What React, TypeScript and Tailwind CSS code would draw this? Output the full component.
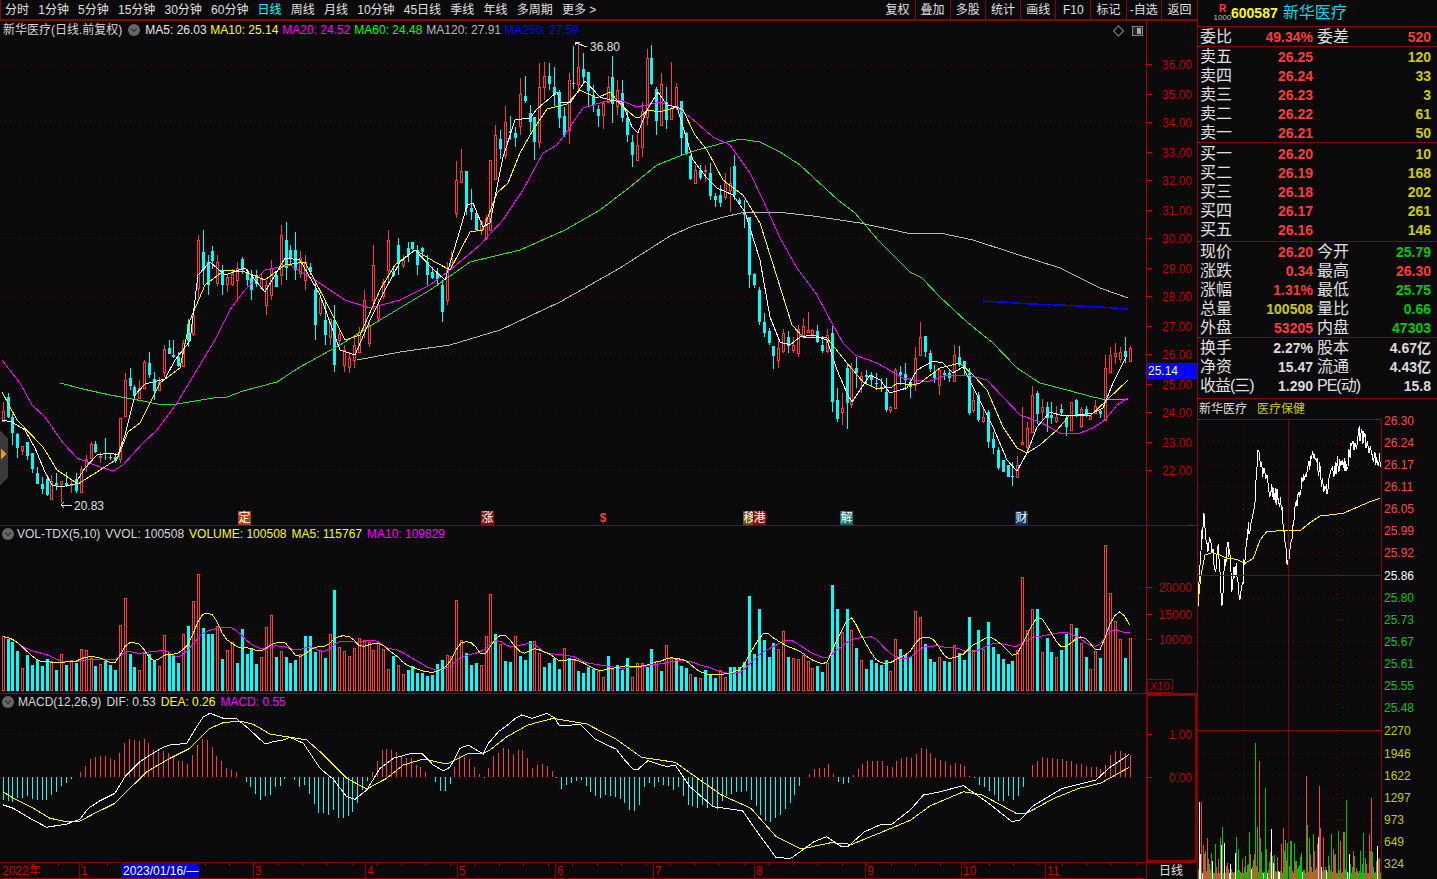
import { ChevronDown } from 'lucide-react';

const BG = '#0a0a0a';
const RED = '#ff3c3c';
const CYAN = '#00ffff';
const AXIS = '#b80000';
const GRID = '#640000';

// seeded noise so every load draws the same picture
function makeRand(seed: number) {
  let s = seed;
  return () => {
    s = (s * 16807) % 2147483647;
    return s / 2147483647;
  };
}

type Pt = [number, number];
const toPath = (pts: Pt[]) => pts.map((p) => `${p[0].toFixed(1)},${p[1].toFixed(1)}`).join(' ');
const lerp = (pts: Pt[], x: number) => {
  if (x <= pts[0][0]) return pts[0][1];
  for (let i = 1; i < pts.length; i++) {
    if (x <= pts[i][0]) {
      const t = (x - pts[i - 1][0]) / (pts[i][0] - pts[i - 1][0] || 1);
      return pts[i - 1][1] + (pts[i][1] - pts[i - 1][1]) * t;
    }
  }
  return pts[pts.length - 1][1];
};

// volume bars: positive is a red (up) day, negative a cyan (down) day
const VOL = [
  55, -52, -49, -40, 23, -36, -26, -31, -25, -32, 30, -21, 37, -26, 31, -28, 42, 41, 33, -25, 27, -30, -26, -21, 66, 93,
  -37, -24, 21, 38, -37, -30, 25, 56, -37, -36, -28, 57, -65, 90, 117, -63, -57, -57, 65, -32, 41, 49, -28, -62, -37,
  -42, -27, 34, 64, 76, -34, 40, -34, -28, -31, 37, -55, -55, -39, 41, -33, 57, -101, 44, 40, 35, 43, 53, 51, 49, 41,
  49, 42, 22, -35, 26, 17, -21, -25, -18, -18, -15, -16, -27, -31, 36, 35, 91, 51, -38, -26, -28, 26, 55, 97,
  -57, 47, -30, -29, 55, -35, -31, -50, 50, 38, -24, -28, -33, -22, 43, -33, 31, -20, -18, -24, -22, 20, 14, -35, 22,
  -26, -21, -33, 14, 28, 28, -24, -42, 30, -20, 46, 33, -33, -25, -23, 17, -14, 13, -21, -16, -13, 21, 14, -24, -24,
  -24, -29, -95, -37, -82, -51, -34, -48, 42, 60, -34, 33, 32, 36, 30, 23,
  -25, -19, 28, -106, -82, 59, -82, 61, -43, 31, -22, -31, -28, -26, -31, 20, 52, -42, -36, -34, 80, 74, -47, -32, -29,
  34, -30, -29, 46, -38, -31, -74, 41, -61, 42, -69, -44, -37, -32, -27, -30, 41, 114, 61, 82, -82, 39, -53, -39, 34,
  -41, -57, 67, -63, 48, -34, 22, 40, -33, 146, 98, 70, 52, -33, 53,
];

const X0 = 2.7;
const STEP = (1129.5 - X0) / (VOL.length - 1);
const barX = (i: number) => X0 + i * STEP;

// MACD histogram heights, read bar by bar
const HIST = [
  -23, -24, -25, -21, -21, -19, -22, -23, -23, -23, -18, -15, -9, -6, -2, 0, 5, 11, 18, 20, 21, 21, 19, 17, 24, 34, 38,
  37, 36, 38, 34, 27, 25, 26, 24, 21, 16, 16, 13, 22, 32, 38, 37, 30, 21, 16, 9, 7, 5, 0, -5, -10, -17, -23, -19, -18,
  -10, -9, -2, 0, -3, -10, -8, -17, -27, -36, -36, -38, -33, -41, -41, -39, -35, -26, -13, -4, 5, 16, 27, 28, 27, 25,
  20, 19, 19, 12, 10, 5, 0, -5, -14, -14, -7, 10, 22, 20, 18, 10, 3, -1, 9, 21, 24, 29, 28, 23, 27, 27, 19, 9, 12, 13,
  11, 6, -1, -12, -8, -6, -4, -3, -9, -15, -19, -21, -18, -19, -20, -22, -26, -33, -34, -28, -10, -6, -10, -5, -8, -9,
  -13, -10, -19, -28, -29, -31, -28, -31, -29, -32, -24, -19, -17, -15, -15, -14, -23, -29, -38, -44, -45, -41, -38,
  -32, -26, -18, -9, 0, 3, 8, 9, 9, 13, 3, -5, -7, -6, 2, 8, 13, 16, 16, 16, 16, 11, 10, 16, 19, 20, 19, 23, 29, 28, 24,
  19, 17, 16, 12, 14, 13, 11, 1, -1, -8, -10, -14, -18, -24, -24, -19, -23, -19, -10, 0, 12, 16, 20, 19, 19, 18, 18, 16,
  16, 13, 13, 11, 10, 10, 8, 12, 22, 26, 26, 24, 22,
];

const z6 = (p: number[]): Pt => [p[0] / 3, 690 + p[1] / 3];
const z11 = (p: number[]): Pt => [490 + p[0] / 2.376, 700 + p[1] / 3];

const DIF: Pt[] = [
  ...[[8,344],[40,355],[90,385],[140,412],[200,402],[240,388],[265,355],[300,332],[345,310],[375,260],[420,215],[450,195],[490,172],[510,165],[560,160],[590,110],[610,80],[630,70],[670,85],[710,87],[745,115],[795,162],[820,155],[850,150],[870,142],[910,160],[960,235],[1000,268],[1040,320],[1065,328],[1100,300],[1140,235],[1180,205],[1235,190],[1265,190],[1300,225],[1330,242],[1350,232],[1380,175],[1405,165],[1450,192],[1465,160]].map(z6),
  ...[[0,125],[20,95],[45,72],[60,55],[75,45],[100,55],[135,40],[155,55],[165,78],[215,73],[250,118],[300,148],[320,180],[340,208],[352,208],[375,182],[420,200],[440,195],[475,260],[530,320],[600,332],[640,405],[680,473],[715,475],[770,425],[800,410],[835,440],[850,440],[890,395],[930,373],[955,373],[1000,328],[1030,285],[1060,278],[1125,257],[1185,310],[1240,365],[1260,360],[1290,318],[1360,265],[1440,240],[1470,205],[1519,163]].map(z11),
];
const DEA: Pt[] = [
  ...[[8,305],[50,330],[100,355],[150,385],[190,393],[240,393],[280,372],[345,340],[390,295],[440,245],[510,205],[570,175],[630,115],[670,98],[720,93],[760,103],[810,132],[860,140],[920,150],[960,185],[1040,265],[1100,297],[1160,265],[1210,225],[1270,207],[1340,222],[1400,192],[1450,190]].map(z6),
  ...[[0,150],[40,110],[90,75],[150,55],[230,72],[300,118],[360,172],[440,187],[490,232],[550,285],[620,325],[680,410],[740,447],[810,428],[860,433],[930,397],[1000,360],[1045,318],[1125,275],[1170,285],[1250,340],[1275,340],[1340,295],[1400,265],[1450,250],[1519,202]].map(z11),
];

const MA5: Pt[] = [
  [2,420],[12,422],[25,430],[35,448],[45,472],[52,485],[60,487],[75,484],[85,468],[97,455],[110,453],[118,455],[125,435],[135,395],[145,384],[165,379],[175,360],[190,341],[198,275],[210,262],[225,275],[245,268],[265,292],[285,258],[300,260],[320,295],[340,350],[355,355],[370,320],[385,290],[400,262],[415,250],[432,268],[445,280],[460,230],[467,205],[473,203],[483,227],[490,223],[503,157],[515,120],[530,118],[537,109],[557,92],[560,102],[570,103],[585,81],[600,97],[610,100],[622,102],[632,127],[638,133],[647,110],[658,92],[667,105],[677,107],[693,160],[707,178],[717,188],[733,195],[745,212],[760,260],[770,317],[780,342],[790,345],[800,337],[813,335],[827,340],[837,370],[847,393],[852,402],[860,390],[870,375],[880,380],[890,393],[907,388],[917,370],[933,361],[943,363],[953,373],[963,367],[973,387],[993,427],[1007,460],[1017,471],[1027,453],[1037,427],[1050,412],[1063,416],[1077,415],[1093,413],[1103,408],[1113,383],[1127,355],
];
const MA10: Pt[] = [
  [2,392],[17,420],[43,447],[57,470],[78,484],[97,472],[117,459],[128,432],[140,423],[160,383],[180,368],[190,320],[205,285],[225,270],[245,272],[265,280],[285,265],[305,262],[325,300],[345,340],[360,335],[380,290],[395,265],[415,250],[435,262],[450,270],[470,232],[483,230],[497,193],[508,183],[520,153],[533,130],[547,109],[567,104],[580,90],[597,98],[610,92],[623,107],[635,117],[640,117],[648,110],[660,112],[677,107],[683,110],[695,135],[707,150],[723,180],[743,195],[760,223],[777,277],[792,325],[803,337],[827,338],[847,363],[863,382],[877,389],[892,387],[897,383],[912,385],[920,383],[940,368],[960,363],[973,375],[987,390],[1003,427],[1017,448],[1027,453],[1040,445],[1057,430],[1070,415],[1090,416],[1107,400],[1128,380],
];
const MA20: Pt[] = [
  [2,360],[20,383],[32,405],[45,417],[63,443],[77,458],[100,467],[113,471],[123,465],[143,443],[157,430],[177,403],[197,370],[215,340],[230,310],[245,290],[265,270],[290,265],[315,280],[345,300],[370,308],[400,300],[430,285],[450,270],[480,245],[503,220],[523,190],[543,153],[557,145],[570,127],[583,108],[603,102],[620,100],[637,107],[660,102],[677,108],[690,117],[713,137],[730,145],[750,173],[763,200],[780,238],[797,268],[817,295],[833,325],[843,343],[855,355],[877,363],[903,378],[927,382],[947,375],[967,375],[987,380],[1003,397],[1020,415],[1040,422],[1060,433],[1080,433],[1093,428],[1105,420],[1117,405],[1128,398],
];
const MA60: Pt[] = [
  [60,383],[83,389],[110,395],[143,401],[157,404],[177,404],[213,398],[227,397],[243,391],[277,382],[300,367],[340,345],[380,320],[430,290],[470,262],[520,250],[565,230],[600,210],[630,187],[657,165],[690,152],[723,143],[740,139],[760,142],[780,152],[800,165],[838,200],[855,213],[878,240],[910,272],[922,278],[940,297],[967,322],[993,343],[1017,368],[1040,383],[1067,390],[1093,397],[1107,400],[1128,399],
];
const MA120: Pt[] = [
  [357,360],[400,352],[450,345],[500,330],[560,302],[620,268],[670,236],[693,226],[720,218],[745,212],[777,212],[813,216],[860,223],[907,233],[940,233],[973,240],[1013,253],[1060,268],[1100,288],[1128,298],
];
const MA250: Pt[] = [[983,301],[1000,302],[1030,304],[1060,305],[1100,307],[1128,309]];

type Candle = [number, number, number, number, number, number]; // x, high, top, bottom, low, up
const fromZoom = (ox: number, oy: number, rows: number[][]): Candle[] =>
  rows.map((r) => [ox + r[0] / 3, oy + r[1] / 3, oy + r[2] / 3, oy + r[3] / 3, oy + r[4] / 3, r[5]]);

const CANDLES: Candle[] = [
  ...fromZoom(0, 340, [
    [7,185,213,245,245,1],[22,160,172,230,235,0],[37,222,232,280,315,0],[50,280,283,325,355,0],[65,318,318,330,345,1],[80,305,305,347,360,0],[95,340,340,387,400,0],[110,380,398,433,433,0],[124,410,432,447,462,0],[140,405,418,465,468,0],[152,405,425,478,480,1],[166,400,430,435,450,0],[181,423,423,432,488,1],[196,395,430,436,440,0],[211,420,432,437,460,1],[226,400,418,452,458,0],[241,378,388,458,458,1],[254,345,358,380,395,1],[268,307,312,355,358,1],[283,303,312,335,338,0],[298,335,348,352,368,1],[313,295,338,340,360,0],[328,338,350,355,360,0],[343,340,350,362,370,0],[355,235,235,358,370,1],[370,100,120,230,230,1],[385,85,113,137,150,0],[400,135,140,168,170,0],[415,120,145,175,175,1],[430,60,68,145,145,1],[445,35,68,105,115,0],[458,97,118,152,180,0],[472,110,128,150,150,1],[487,15,27,97,110,1],[502,0,25,42,42,0],[517,0,45,50,55,0],[532,35,52,78,80,0],[547,0,10,80,82,1],
  ]),
  ...[
    [198,235,240,288,298,1],[205,230,252,270,285,0],[210,255,262,285,295,0],[222,265,270,285,295,0],[236,262,268,280,300,1],[250,270,278,290,300,0],[265,280,285,305,315,1],[272,260,268,295,300,1],[282,225,235,275,285,1],[287,222,240,268,280,0],[295,232,250,270,280,0],[305,255,262,280,290,1],[315,280,290,325,340,0],[325,300,320,335,345,0],[335,305,320,365,372,0],[345,345,350,365,372,1],[355,335,345,360,368,1],[365,290,300,330,338,1],[375,245,265,300,310,1],[390,230,240,270,285,1],[400,238,245,262,275,0],[415,245,250,265,275,0],[428,255,262,275,285,0],[442,280,285,312,322,0],[448,262,270,300,305,1],
  ] as Candle[],
  ...fromZoom(440, 30, [
    [43,392,450,550,565,1],[55,358,423,457,457,1],[70,423,423,533,555,0],[85,478,535,545,570,0],[100,548,548,600,600,0],[145,390,390,600,600,1],[158,285,315,448,450,1],[172,300,327,357,388,0],[187,228,277,375,388,1],[202,258,303,308,330,0],[217,290,310,325,350,0],[232,145,192,290,315,1],[247,138,198,212,220,0],[260,225,250,275,305,0],[275,262,262,335,390,0],[290,98,172,337,355,1],[305,97,138,172,210,1],[320,100,138,162,180,0],[335,112,172,195,228,0],[350,180,187,265,295,0],[362,230,258,315,320,0],[377,130,150,302,342,1],[392,48,160,162,178,0],[407,37,113,163,190,1],[422,70,117,142,155,0],[437,125,125,182,228,0],[449,165,195,225,245,0],[464,225,237,258,290,0],[479,215,220,257,297,1],[493,138,172,218,218,1],[508,78,142,222,278,0],[523,150,180,228,255,1],[538,150,188,263,275,0],[550,240,265,315,335,0],[565,315,337,375,412,0],[580,313,345,390,390,1],[595,215,245,352,380,1],[610,58,85,263,285,1],[625,45,85,162,165,0],[640,172,177,272,315,0],[652,130,162,285,285,1],[667,170,215,270,298,0],[682,95,235,267,267,1],[697,160,172,232,240,1],[712,213,213,323,375,0],[727,307,310,372,375,0],[742,375,378,447,450,0],[755,405,420,460,462,1],[769,405,420,445,450,0],[784,405,420,425,455,1],[800,400,430,497,510,0],[815,490,497,510,532,0],[830,465,495,520,530,0],[845,430,460,502,510,1],[858,410,460,480,545,1],[872,375,408,495,510,0],[887,505,510,522,525,0],
  ]),
  ...fromZoom(740, 200, [
    [18,0,35,45,85,0],[30,50,50,225,263,0],[45,220,222,255,265,0],[58,260,270,365,375,0],[73,340,367,400,412,0],[88,385,393,430,435,0],[103,438,438,467,508,0],[118,415,445,482,503,1],[133,388,400,455,458,1],[148,393,410,437,458,0],[160,410,435,452,458,1],[175,375,388,460,472,1],[190,353,378,405,405,1],[205,337,392,397,400,1],[220,388,392,402,412,1],[235,375,392,425,430,0],[250,408,435,452,460,0],[262,388,405,455,458,1],[277,378,400,607,635,0],[292,565,600,657,665,0],[307,578,625,637,675,1],[322,490,505,610,687,0],[337,490,505,612,623,1],[352,472,505,520,565,0],[365,515,530,540,580,1],[380,510,525,530,555,0],[395,515,525,540,560,0],[410,520,548,552,570,0],[425,535,560,568,575,0],[440,535,575,630,635,0],[455,618,622,632,638,1],[466,503,512,625,627,1],[481,497,515,525,555,0],[496,490,522,540,570,0],[511,535,545,560,593,0],[526,440,475,555,572,1],[541,365,412,465,465,1],[556,408,408,455,470,0],[569,450,458,507,515,0],[584,495,517,535,550,0],[598,505,510,555,585,1],[613,510,518,525,540,0],[628,510,520,535,545,0],[643,435,465,545,545,1],[658,437,472,495,500,0],[671,483,483,505,525,0],[686,505,520,640,645,0],[700,570,602,630,638,1],[715,575,585,660,665,0],[730,620,652,665,670,1],[745,630,635,725,743,0],[760,695,717,743,762,0],[773,740,750,805,810,0],[787,780,780,815,815,0],[802,795,795,830,830,0],[817,785,828,830,858,0],[832,768,795,833,835,1],[847,620,727,733,735,1],[862,665,685,742,760,1],[875,558,585,697,700,1],[890,572,578,642,672,0],[905,598,622,633,660,1],[920,605,622,655,695,0],[935,605,645,655,672,0],[950,618,652,663,668,1],[965,612,627,640,648,0],[977,645,655,680,708,0],[992,605,607,690,692,1],[1007,598,600,645,652,0],[1022,620,628,680,685,1],[1037,618,628,645,650,0],[1052,645,650,657,660,1],[1067,600,620,640,640,1],[1082,630,632,643,655,0],[1093,465,505,660,662,1],[1108,440,465,516,518,1],[1123,430,460,470,492,1],[1138,440,457,477,490,1],[1153,410,453,470,490,0],[1168,438,445,483,485,1],
  ]),
];

function buildCandles() {
  const rand = makeRand(4711);
  const byIndex = new Map<number, Candle>();
  CANDLES.forEach((c) => {
    let i = Math.round((c[0] - X0) / STEP);
    if (byIndex.has(i) && !byIndex.has(i + 1)) i += 1;
    byIndex.set(i, c);
  });
  return VOL.map((v, i) => {
    const known = byIndex.get(i);
    if (known) return { x: barX(i), hi: known[1], top: known[2], bot: known[3], lo: known[4], up: known[5] === 1 };
    const mid = lerp(MA5, barX(i)) + (rand() - 0.5) * 24;
    const half = 2 + rand() * Math.abs(v) * 0.15;
    return { x: barX(i), hi: mid - half - rand() * 8, top: mid - half, bot: mid + half, lo: mid + half + rand() * 8, up: v > 0 };
  });
}

function movingAvg(n: number): Pt[] {
  const raw = VOL.map((_, i) => {
    const from = Math.max(0, i - n + 1);
    const part = VOL.slice(from, i + 1);
    return part.reduce((s, v) => s + Math.abs(v), 0) / part.length;
  });
  return raw.map((_, i) => {
    const a = raw[Math.max(0, i - 1)];
    const c = raw[Math.min(raw.length - 1, i + 1)];
    return [barX(i), 691 - (a + raw[i] * 2 + c) / 4] as Pt;
  });
}

function Circle() {
  return (
    <span className="flex h-[12px] w-[12px] shrink-0 items-center justify-center rounded-full bg-[#666666]">
      <ChevronDown size={10} strokeWidth={2.5} color="#1c1c1c" />
    </span>
  );
}

function MainPane() {
  const candles = buildCandles();
  const prices = ['36.00', '35.00', '34.00', '33.00', '32.00', '31.00', '30.00', '29.00', '28.00', '27.00', '26.00', '25.00', '24.00', '23.00', '22.00'];
  const ys = [64, 94, 122, 152, 180, 210, 238, 268, 296, 326, 354, 384, 412, 442, 470];
  return (
    <div className="relative h-[505px] border-b border-[#8a0000]">
      <svg width={1197} height={504} viewBox="0 21 1197 504" shapeRendering="crispEdges">
        {ys.filter((_, i) => i % 2 === 0).map((y) => (
          <line key={y} x1={0} x2={1146} y1={y + 0.5} y2={y + 0.5} stroke={GRID} strokeDasharray="1 4" />
        ))}
        {candles.map((c, i) => {
          const X = Math.round(c.x);
          const color = c.up ? RED : CYAN;
          return (
            <g key={i}>
              <line x1={X + 0.5} x2={X + 0.5} y1={c.hi} y2={c.lo} stroke={color} />
              {c.up ? (
                <rect x={X - 0.5} y={c.top} width={2} height={Math.max(c.bot - c.top, 1)} fill={BG} stroke={color} />
              ) : (
                <rect x={X - 1} y={c.top} width={3} height={Math.max(c.bot - c.top, 1)} fill={color} />
              )}
            </g>
          );
        })}
        <polyline points={toPath(MA120)} fill="none" stroke="#b8b8b8" />
        <polyline points={toPath(MA60)} fill="none" stroke="#22e622" />
        <polyline points={toPath(MA250)} fill="none" stroke="#0000ff" strokeWidth={1.5} />
        <polyline points={toPath(MA20)} fill="none" stroke="#ff00ff" />
        <polyline points={toPath(MA10)} fill="none" stroke="#ffff00" />
        <polyline points={toPath(MA5)} fill="none" stroke="#ffffff" />

        <path d="M1146.5 21V525" stroke="#a00000" />
        {ys.map((y, i) => (
          <g key={y}>
            <line x1={1147} x2={1152} y1={y + 0.5} y2={y + 0.5} stroke={AXIS} />
            <text x={1192} y={y + 5} textAnchor="end" fontSize={12} fill={AXIS} shapeRendering="auto">
              {prices[i]}
            </text>
          </g>
        ))}
        <rect x={1147} y={363} width={50} height={16} fill="#0000ff" />
        <text x={1148} y={375} fontSize={12} fill="#ffffff">
          25.14
        </text>

        {/* high / low marks */}
        <path d="M575.5 45V42h4M576 43l11 4" stroke="#e0e0e0" fill="none" />
        <text x={590} y={51} fontSize={12} fill="#e0e0e0">
          36.80
        </text>
        <path d="M61 505h11M61 505l3-3M61 505l3 3" stroke="#e0e0e0" fill="none" />
        <text x={74} y={510} fontSize={12} fill="#e0e0e0">
          20.83
        </text>

        {/* side handle */}
        <path d="M0 430l8 9v38l-8 9z" fill="#3a3a3a" />
        <path d="M1 449l5 5-5 5z" fill="#e0a020" />

        {/* view toggles */}
        <path d="M1118.5 26l5 5-5 5-5-5z" fill="none" stroke="#666666" />
        <rect x={1132.5} y={26.5} width={10} height={9} rx={1} fill="#222" stroke="#888888" />
        <rect x={1137} y={28} width={4} height={6} fill="#aaaaaa" />
      </svg>

      {/* pane caption */}
      <div className="absolute left-[3px] top-[2px] flex h-[14px] items-center text-[12px] leading-none">
        <span className="text-[#d8d8d8]">新华医疗(日线.前复权)</span>
        <span className="ml-[6px]">
          <Circle />
        </span>
        <span className="ml-[5px] w-[65px] text-[#e8e8e8]">MA5: 26.03</span>
        <span className="w-[72px] text-[#ffff00]">MA10: 25.14</span>
        <span className="w-[72px] text-[#ff00ff]">MA20: 24.52</span>
        <span className="w-[72px] text-[#00ff00]">MA60: 24.48</span>
        <span className="w-[78px] text-[#b8b8b8]">MA120: 27.91</span>
        <span className="text-[#0000ff]">MA250: 27.59</span>
      </div>

      {/* event marks along the bottom */}
      <span className="absolute left-[238px] top-[490px] h-[14px] w-[13px] bg-[#b5400f] text-center text-[12px] leading-[14px] text-white">定</span>
      <span className="absolute left-[481px] top-[490px] h-[14px] w-[13px] bg-[#860808] text-center text-[12px] leading-[14px] text-white">涨</span>
      <span className="absolute left-[597px] top-[490px] h-[14px] w-[12px] text-center text-[12px] font-bold leading-[14px] text-[#ff3c3c]">$</span>
      <span className="absolute left-[743px] top-[490px] h-[14px] w-[13px] bg-[#7a4a0a] text-center text-[12px] leading-[14px] text-white">移</span>
      <span className="absolute left-[753px] top-[490px] h-[14px] w-[13px] bg-[#860808] text-center text-[12px] leading-[14px] text-white">港</span>
      <span className="absolute left-[840px] top-[490px] h-[14px] w-[13px] bg-[#0b7070] text-center text-[12px] leading-[14px] text-white">解</span>
      <span className="absolute left-[1015px] top-[490px] h-[14px] w-[13px] bg-[#10365f] text-center text-[12px] leading-[14px] text-white">财</span>
    </div>
  );
}

function VolPane() {
  return (
    <div className="relative h-[168px] border-b border-[#8a0000]">
      <svg width={1197} height={167} viewBox="0 526 1197 167" shapeRendering="crispEdges">
        <line x1={0} x2={1146} y1={587.5} y2={587.5} stroke={GRID} strokeDasharray="1 4" />
        <line x1={0} x2={1146} y1={638.5} y2={638.5} stroke={GRID} strokeDasharray="1 4" />
        {VOL.map((v, i) => {
          const X = Math.round(barX(i));
          const h = Math.abs(v);
          return v > 0 ? (
            <rect key={i} x={X - 0.5} y={691 - h} width={2} height={h - 0.5} fill={BG} stroke={RED} />
          ) : (
            <rect key={i} x={X - 1} y={691 - h} width={3} height={h} fill={CYAN} />
          );
        })}
        <polyline points={toPath(movingAvg(10))} fill="none" stroke="#ff00ff" />
        <polyline points={toPath(movingAvg(5))} fill="none" stroke="#ffff00" />
        <path d="M1146.5 526V693" stroke="#a00000" />
        {[
          ['20000', 587],
          ['15000', 614],
          ['10000', 639],
        ].map(([t, y]) => (
          <g key={t}>
            <line x1={1147} x2={1152} y1={Number(y) + 0.5} y2={Number(y) + 0.5} stroke={AXIS} />
            <text x={1192} y={Number(y) + 5} textAnchor="end" fontSize={12} fill={AXIS}>
              {t}
            </text>
          </g>
        ))}
        <rect x={1147.5} y={679.5} width={25} height={13} fill="none" stroke="#8a0000" />
        <text x={1150} y={690} fontSize={11} fill={AXIS}>
          X10
        </text>
      </svg>
      <div className="absolute left-[2px] top-[1px] flex h-[14px] items-center gap-[5px] text-[12px] leading-none">
        <Circle />
        <span className="ml-[-2px] text-[#d8d8d8]">VOL-TDX(5,10)</span>
        <span className="text-[#d8d8d8]">VVOL: 100508</span>
        <span className="text-[#ffff00]">VOLUME: 100508</span>
        <span className="text-[#ffff00]">MA5: 115767</span>
        <span className="text-[#ff00ff]">MA10: 109829</span>
      </div>
    </div>
  );
}

function MacdPane() {
  return (
    <div className="relative h-[169px] border-b border-[#8a0000]">
      <svg width={1197} height={168} viewBox="0 694 1197 168" shapeRendering="crispEdges">
        <line x1={0} x2={1146} y1={734.5} y2={734.5} stroke={GRID} strokeDasharray="1 4" />
        <line x1={0} x2={1146} y1={777.5} y2={777.5} stroke={GRID} strokeDasharray="1 4" />
        {HIST.map((h, i) => {
          const X = Math.round(X0 + (i * (1129.5 - X0)) / (HIST.length - 1)) + 0.5;
          if (h === 0) return null;
          return <line key={i} x1={X} x2={X} y1={777} y2={777 - h} stroke={h > 0 ? RED : CYAN} />;
        })}
        <polyline points={toPath(DEA)} fill="none" stroke="#ffff00" />
        <polyline points={toPath(DIF)} fill="none" stroke="#ffffff" />
        <rect x={1147} y={695} width={49} height={166} fill="none" stroke="#8a0000" strokeWidth={2} />
        {[
          ['1.00', 734],
          ['0.00', 777],
        ].map(([t, y]) => (
          <g key={t}>
            <line x1={1148} x2={1152} y1={Number(y) + 0.5} y2={Number(y) + 0.5} stroke={AXIS} />
            <text x={1192} y={Number(y) + 5} textAnchor="end" fontSize={12} fill={AXIS}>
              {t}
            </text>
          </g>
        ))}
      </svg>
      <div className="absolute left-[2px] top-[1px] flex h-[14px] items-center gap-[5px] text-[12px] leading-none">
        <Circle />
        <span className="ml-[-1px] text-[#d8d8d8]">MACD(12,26,9)</span>
        <span className="text-[#d8d8d8]">DIF: 0.53</span>
        <span className="text-[#ffff00]">DEA: 0.26</span>
        <span className="text-[#ff00ff]">MACD: 0.55</span>
      </div>
    </div>
  );
}

function DateBar() {
  const months = [
    ['1', 79],
    ['3', 253],
    ['4', 365],
    ['5', 457],
    ['6', 555],
    ['7', 653],
    ['8', 754],
    ['9', 865],
    ['10', 961],
    ['11', 1045],
  ] as const;
  const ticks: number[] = [];
  for (let x = 33; x < 1146; x += 24.5) ticks.push(Math.round(x));
  return (
    <svg width={1197} height={16} viewBox="0 863 1197 16" shapeRendering="crispEdges" className="block">
      {ticks.map((x) => (
        <line key={x} x1={x + 0.5} x2={x + 0.5} y1={863} y2={866} stroke="#8a0000" />
      ))}
      <text x={2} y={875} fontSize={12} fill="#c80000">
        2022年
      </text>
      {months.map(([t, x]) => (
        <g key={t}>
          <line x1={x + 0.5} x2={x + 0.5} y1={863} y2={878} stroke="#8a0000" />
          <text x={x + 2} y={875} fontSize={12} fill="#c80000">
            {t}
          </text>
        </g>
      ))}
      <rect x={122} y={863} width={77} height={15} fill="#0000e0" />
      <text x={123} y={875} fontSize={12} fill="#ffffff">
        2023/01/16/—
      </text>
      <path d="M0 878.5H1146M1146.5 863V879" stroke="#8a0000" />
      <text x={1159} y={875} fontSize={12} fill="#e0e0e0">
        日线
      </text>
    </svg>
  );
}

const TABS = ['分时', '1分钟', '5分钟', '15分钟', '30分钟', '60分钟', '日线', '周线', '月线', '10分钟', '45日线', '季线', '年线', '多周期', '更多 >'];
const TOOLS = ['复权', '叠加', '多股', '统计', '画线', 'F10', '标记', '-自选', '返回'];

function TopBar() {
  return (
    <div className="flex h-[21px] items-center justify-between border-b-2 border-l border-[#8a0000] text-[12px] leading-none text-[#e0e0e0]">
      <div className="ml-[4px] flex items-center gap-[9.2px]">
        {TABS.map((t) => (
          <span key={t} className={t === '日线' ? 'text-[#00ffff]' : ''}>
            {t}
          </span>
        ))}
      </div>
      <div className="flex h-full">
        {TOOLS.map((t) => (
          <span key={t} className="flex w-[35.2px] items-center justify-center border-r border-[#8a0000] last:border-r-0">
            {t}
          </span>
        ))}
      </div>
    </div>
  );
}

const SELLS = [
  ['卖五', '26.25', '120'],
  ['卖四', '26.24', '33'],
  ['卖三', '26.23', '3'],
  ['卖二', '26.22', '61'],
  ['卖一', '26.21', '50'],
];
const BUYS = [
  ['买一', '26.20', '10'],
  ['买二', '26.19', '168'],
  ['买三', '26.18', '202'],
  ['买四', '26.17', '261'],
  ['买五', '26.16', '146'],
];

function BookRow({ row }: { row: string[] }) {
  return (
    <div className="flex h-[19px] items-center pl-[2px] pr-[6px]">
      <span className="w-[32px] text-[16px] leading-none text-[#e0e0e0]">{row[0]}</span>
      <span className="w-[81px] text-right text-[14px] font-bold leading-none text-[#ff3c3c]">{row[1]}</span>
      <span className="flex-1 text-right text-[14px] font-bold leading-none text-[#cccc00]">{row[2]}</span>
    </div>
  );
}

const WHITE = 'text-[#dcdcdc]';
const STAT_RED = 'text-[#ff3c3c]';
const STAT_GREEN = 'text-[#00c800]';
const STAT_YELLOW = 'text-[#cccc00]';

function StatRow(p: { a: string; v: string; c: string; b: string; w: string; d: string }) {
  return (
    <div className="flex h-[19px] items-center pl-[2px] pr-[6px]">
      <span className={`w-[32px] whitespace-nowrap text-[16px] leading-none text-[#e0e0e0] ${p.a.length > 2 ? 'tracking-[-1px]' : ''}`}>{p.a}</span>
      <span className={`w-[81px] text-right text-[14px] font-bold leading-none ${p.c}`}>{p.v}</span>
      <span className={`ml-[4px] w-[32px] whitespace-nowrap text-[16px] leading-none text-[#e0e0e0] ${p.b.length > 2 ? 'tracking-[-1px]' : ''}`}>{p.b}</span>
      <span className={`flex-1 text-right text-[14px] font-bold leading-none ${p.d}`}>{p.w}</span>
    </div>
  );
}

// intraday minute line
const z4 = (p: number[]): Pt => [1140 + p[0] / 3, 480 + p[1] / 3];
const PRICE: Pt[] = [
  ...[[176,365],[182,190],[193,105],[200,200],[215,180],[225,265],[235,225],[245,360],[255,250],[265,190],[275,300],[290,270],[297,355],[310,290],[318,175],[340,100],[350,0]].map(z4),
  [1258, 452], [1262, 470], [1270, 490], [1280, 500], [1285, 540], [1288, 565], [1295, 510], [1300, 490], [1305, 470], [1315, 455], [1325, 490], [1335, 465], [1345, 465], [1360, 432], [1368, 445], [1378, 465], [1381, 458],
];
const AVG: Pt[] = [[175,365],[182,290],[195,225],[215,218],[240,225],[260,235],[290,238],[315,250],[340,235],[360,180],[380,155],[420,152],[480,152],[510,128],[540,108],[610,100],[690,65],[720,55]].map(z4);
const SPIKES: Record<number, [number, string]> = {
  1199: [802, '#ffffff'], 1201: [802, '#ff4040'], 1255: [743, '#00c000'], 1259: [761, '#ff4040'], 1265: [788, '#00c000'], 1306: [776, '#ff4040'], 1319: [786, '#ff4040'], 1346: [800, '#00c000'], 1371: [798, '#ff4040'],
};

function Intraday() {
  const rand = makeRand(90210);
  const pts: Pt[] = [];
  for (let x = 1198; x <= 1381; x += 0.75) {
    const noise = x < 1245 ? 24 : 18;
    pts.push([x, lerp(PRICE, x) + (rand() - 0.5) * noise]);
  }
  const bars: { x: number; top: number; color: string }[] = [];
  for (let x = 1198; x <= 1380; x++) {
    const r = rand();
    const color = r < 0.48 ? '#00c000' : r < 0.86 ? '#ff4040' : '#ffffff';
    const h = 6 + Math.pow(rand(), 2.4) * 48;
    const spike = SPIKES[x];
    bars.push({ x, top: spike ? spike[0] : 879 - h, color: spike ? spike[1] : color });
  }
  const upper: [string, number, string][] = [
    ['26.30', 420, '#ff4848'], ['26.24', 442, '#ff4848'], ['26.17', 464, '#ff4848'], ['26.11', 486, '#ff4848'], ['26.05', 508, '#ff4848'], ['25.99', 530, '#ff4848'], ['25.92', 552, '#ff4848'], ['25.86', 575, '#ffffff'],
    ['25.80', 597, '#00c800'], ['25.73', 619, '#00c800'], ['25.67', 641, '#00c800'], ['25.61', 663, '#00c800'], ['25.55', 685, '#00c800'], ['25.48', 707, '#00c800'],
    ['2270', 730, '#c8c800'], ['1946', 753, '#c8c800'], ['1622', 775, '#c8c800'], ['1297', 797, '#c8c800'], ['973', 819, '#c8c800'], ['649', 841, '#c8c800'], ['324', 863, '#c8c800'],
  ];
  return (
    <svg width={239} height={460} viewBox="1198 419 239 460" shapeRendering="crispEdges" className="block overflow-visible">
      {upper.map(([t, y, c]) => (
        <g key={t}>
          {y !== 575 && y !== 730 && y !== 420 && <line x1={1198} x2={1381} y1={y + 0.5} y2={y + 0.5} stroke={GRID} strokeDasharray="1 4" />}
          <text x={1384} y={y + 5} fontSize={12} fill={c}>
            {t}
          </text>
        </g>
      ))}
      <line x1={1243.5} x2={1243.5} y1={419} y2={879} stroke={GRID} strokeDasharray="1 4" />
      <line x1={1336.5} x2={1336.5} y1={419} y2={879} stroke={GRID} strokeDasharray="1 4" />
      {bars.map((b) => (
        <line key={b.x} x1={b.x + 0.5} x2={b.x + 0.5} y1={b.top} y2={879} stroke={b.color} />
      ))}
      <polyline points={toPath(pts)} fill="none" stroke="#ffffff" />
      <polyline points={toPath(AVG)} fill="none" stroke="#ffff00" />
      <path d="M1198 419.5H1381.5V879M1288.5 419V879M1198 575.5H1381M1198 730.5H1381" stroke="#8a0000" fill="none" />
    </svg>
  );
}

function RightPanel() {
  return (
    <div className="flex w-[240px] flex-col border-l border-[#8a0000]">
      <div className="flex h-[27px] items-center border-b border-[#8a0000] pl-[16px]">
        <div className="flex w-[17px] flex-col items-center leading-none">
          <span className="text-[10px] font-bold text-[#ff3c3c]">R</span>
          <span className="text-[8px] text-[#c0c0c0]">1000</span>
        </div>
        <span className="text-[14px] font-bold leading-none text-[#ffff00]">600587</span>
        <span className="ml-[5px] text-[16px] leading-none text-[#00d8e8]">新华医疗</span>
      </div>
      <div className="h-[20px] border-b border-[#8a0000]">
        <StatRow a="委比" v="49.34%" c={STAT_RED} b="委差" w="520" d={STAT_RED} />
      </div>
      <div className="h-[96px] border-b border-[#8a0000]">
        {SELLS.map((r) => (
          <BookRow key={r[0]} row={r} />
        ))}
      </div>
      <div className="h-[99px] border-b border-[#8a0000] pt-[1px]">
        {BUYS.map((r) => (
          <BookRow key={r[0]} row={r} />
        ))}
      </div>
      <div className="h-[96px] border-b border-[#8a0000]">
        <StatRow a="现价" v="26.20" c={STAT_RED} b="今开" w="25.79" d={STAT_GREEN} />
        <StatRow a="涨跌" v="0.34" c={STAT_RED} b="最高" w="26.30" d={STAT_RED} />
        <StatRow a="涨幅" v="1.31%" c={STAT_RED} b="最低" w="25.75" d={STAT_GREEN} />
        <StatRow a="总量" v="100508" c={STAT_YELLOW} b="量比" w="0.66" d={STAT_GREEN} />
        <StatRow a="外盘" v="53205" c={STAT_RED} b="内盘" w="47303" d={STAT_GREEN} />
      </div>
      <div className="h-[61px] border-b border-[#8a0000]">
        <StatRow a="换手" v="2.27%" c={WHITE} b="股本" w="4.67亿" d={WHITE} />
        <StatRow a="净资" v="15.47" c={WHITE} b="流通" w="4.43亿" d={WHITE} />
        <StatRow a="收益(三)" v="1.290" c={WHITE} b="PE(动)" w="15.8" d={WHITE} />
      </div>
      <div className="flex h-[20px] items-center gap-[10px] pl-[1px] text-[12px] leading-none">
        <span className="text-[#e0e0e0]">新华医疗</span>
        <span className="text-[#cccc00]">医疗保健</span>
      </div>
      <Intraday />
    </div>
  );
}

export default function App() {
  return (
    <div className="flex h-[879px] w-[1437px] overflow-hidden bg-[#0a0a0a] font-['Liberation_Sans','Noto_Sans_CJK_SC',sans-serif]">
      <div className="flex w-[1197px] flex-col">
        <TopBar />
        <MainPane />
        <VolPane />
        <MacdPane />
        <DateBar />
      </div>
      <RightPanel />
    </div>
  );
}
